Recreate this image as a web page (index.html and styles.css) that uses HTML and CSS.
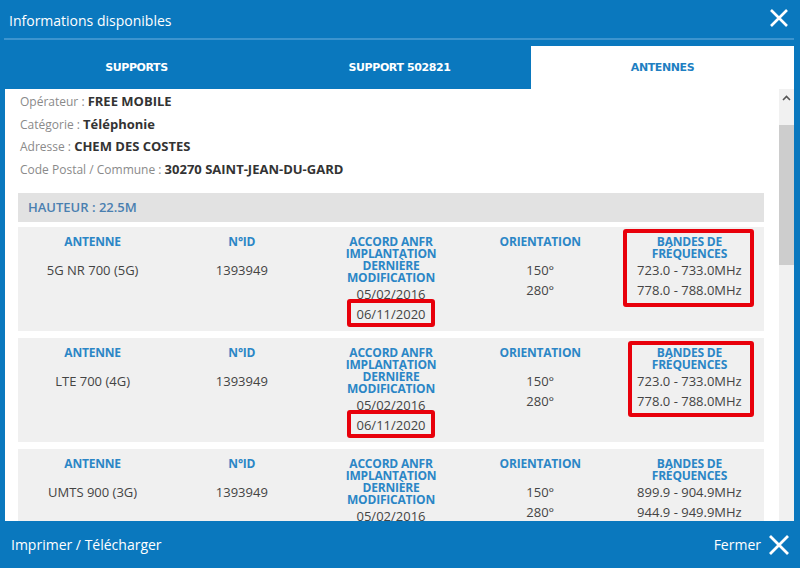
FILE: index.html
```html
<!DOCTYPE html>
<html lang="fr">
<head>
  <meta charset="UTF-8">
  <title>Informations disponibles</title>
  <link rel="stylesheet" href="styles.css">
</head>
<body>
<div class="modal">
  <header class="top">
    <h1>Informations disponibles</h1>
    <span class="close"><svg width="20" height="20" viewBox="0 0 20 20"><path d="M2 2L18 18M18 2L2 18" stroke="#fff" stroke-width="2.6" fill="none"/></svg></span>
  </header>

  <nav class="tabs">
    <a>SUPPORTS</a>
    <a>SUPPORT 502821</a>
    <a class="on">ANTENNES</a>
  </nav>

  <div class="body">
    <div class="scroll">
      <ul class="info">
        <li>Opérateur : <b>FREE MOBILE</b></li>
        <li>Catégorie : <b>Téléphonie</b></li>
        <li>Adresse : <b>CHEM DES COSTES</b></li>
        <li>Code Postal / Commune : <b>30270 SAINT-JEAN-DU-GARD</b></li>
      </ul>

      <div class="height">HAUTEUR : 22.5M</div>

      <div class="card">
        <div class="col"><h3>ANTENNE</h3><p>5G NR 700 (5G)</p></div>
        <div class="col"><h3>N°ID</h3><p>1393949</p></div>
        <div class="col"><h3>ACCORD ANFR<br>IMPLANTATION<br>DERNIÈRE<br>MODIFICATION</h3><p>05/02/2016</p><p><span class="mark">06/11/2020</span></p></div>
        <div class="col"><h3>ORIENTATION</h3><p>150°</p><p>280°</p></div>
        <div class="col"><div class="mark wide"><h3>BANDES DE<br>FRÉQUENCES</h3><p>723.0 - 733.0MHz</p><p>778.0 - 788.0MHz</p></div></div>
      </div>

      <div class="card">
        <div class="col"><h3>ANTENNE</h3><p>LTE 700 (4G)</p></div>
        <div class="col"><h3>N°ID</h3><p>1393949</p></div>
        <div class="col"><h3>ACCORD ANFR<br>IMPLANTATION<br>DERNIÈRE<br>MODIFICATION</h3><p>05/02/2016</p><p><span class="mark">06/11/2020</span></p></div>
        <div class="col"><h3>ORIENTATION</h3><p>150°</p><p>280°</p></div>
        <div class="col"><div class="mark wide"><h3>BANDES DE<br>FRÉQUENCES</h3><p>723.0 - 733.0MHz</p><p>778.0 - 788.0MHz</p></div></div>
      </div>

      <div class="card">
        <div class="col"><h3>ANTENNE</h3><p>UMTS 900 (3G)</p></div>
        <div class="col"><h3>N°ID</h3><p>1393949</p></div>
        <div class="col"><h3>ACCORD ANFR<br>IMPLANTATION<br>DERNIÈRE<br>MODIFICATION</h3><p>05/02/2016</p><p>06/11/2020</p></div>
        <div class="col"><h3>ORIENTATION</h3><p>150°</p><p>280°</p></div>
        <div class="col"><h3>BANDES DE<br>FRÉQUENCES</h3><p>899.9 - 904.9MHz</p><p>944.9 - 949.9MHz</p></div>
      </div>
    </div>

    <div class="bar">
      <span class="up"><svg width="9" height="6" viewBox="0 0 9 6"><path d="M1 5L4.5 1.5L8 5" stroke="#555" stroke-width="1.6" fill="none"/></svg></span>
      <span class="thumb"></span>
    </div>
  </div>

  <footer class="foot">
    <span>Imprimer / Télécharger</span>
    <span class="shut">Fermer <svg width="22" height="22" viewBox="0 0 22 22"><path d="M2 2L20 20M20 2L2 20" stroke="#fff" stroke-width="2.8" fill="none"/></svg></span>
  </footer>
</div>
</body>
</html>
```

FILE: styles.css
```css
html, body { margin:0; padding:0; }

body {
  font-family: 'Open Sans', sans-serif;
  background:#0a78be;
}

.modal {
  width:800px;height:568px;
  display:flex;flex-direction:column;
  background:#0a78be;
  overflow:hidden;
}

/* title bar */
.top {
  height:38px;
  margin:0 6px 0 4px;
  border-bottom:2px solid #3c94cf;
  display:flex;align-items:center;justify-content:space-between;
}
.top h1 {
  margin:0 0 0 5px;
  font-size:14px;font-weight:400;color:#fff;
  position:relative;top:1px;
}
.close { display:flex; margin-right:5px; position:relative; top:-1px; }

/* tabs */
.tabs {
  margin:6px 6px 0 5px;
  height:43px;
  display:flex;
}
.tabs a {
  flex:1;
  display:flex;align-items:center;justify-content:center;
  font-family:'DejaVu Sans', sans-serif;
  font-size:11px;font-weight:700;color:#fff;
  letter-spacing:-0.4px;
}
.tabs a.on { background:#fff; color:#1f7fc2; }

/* scrolling content */
.body {
  flex:1;
  margin:0 6px 0 5px;
  background:#fff;
  display:flex;
  overflow:hidden;
}
.scroll { flex:1; padding:2px 15px 0 13px; overflow:hidden; }

.info { list-style:none; margin:0; padding:0 0 0 2px; }
.info li { height:22.5px; font-size:12px; line-height:22px; color:#8a8a8a; }
.info b { font-size:13px; line-height:1; font-weight:700; color:#333; }

.height {
  margin-top:12px;
  height:29px;line-height:29px;
  padding-left:10px;
  background:#e2e2e2;
  font-size:13px;font-weight:600;color:#4a7fb0;
}

.card {
  margin-top:5px;
  background:#f0f0f0;
  display:flex;
  padding:9px 0 7px;
}
.card + .card { margin-top:7px; }
.col { flex:1; text-align:center; }
.col h3 {
  margin:0;
  min-height:24px;
  font-size:12px;line-height:12px;font-weight:700;color:#2b86c6;
  letter-spacing:-0.2px;
}
.col p { margin:0; font-size:13px; line-height:20px; color:#444; }

/* red frames */
.mark { position:relative; display:inline-block; }
.mark::after {
  content:"";
  position:absolute;
  inset:-5px -9px -3px -10px;
  border:4px solid #e8000b;
  border-radius:3px;
}
.mark.wide { display:block; }
.mark.wide::after { inset:-7px 10px -7px 8px; }
.card + .card .mark.wide::after { inset:-6px 10px -6px 13px; }

/* scrollbar */
.bar {
  width:15px;
  background:#f1f1f1;
  display:flex;flex-direction:column;
}
.up { height:17px; display:flex; align-items:center; justify-content:center; }
.thumb { margin-top:19px; height:140px; background:#cdcdcd; }

/* footer */
.foot {
  height:47px;
  padding:0 10px 0 11px;
  display:flex;align-items:center;justify-content:space-between;
  font-size:14px;color:#fff;
}
.shut { display:flex; align-items:center; gap:7px; }
```
